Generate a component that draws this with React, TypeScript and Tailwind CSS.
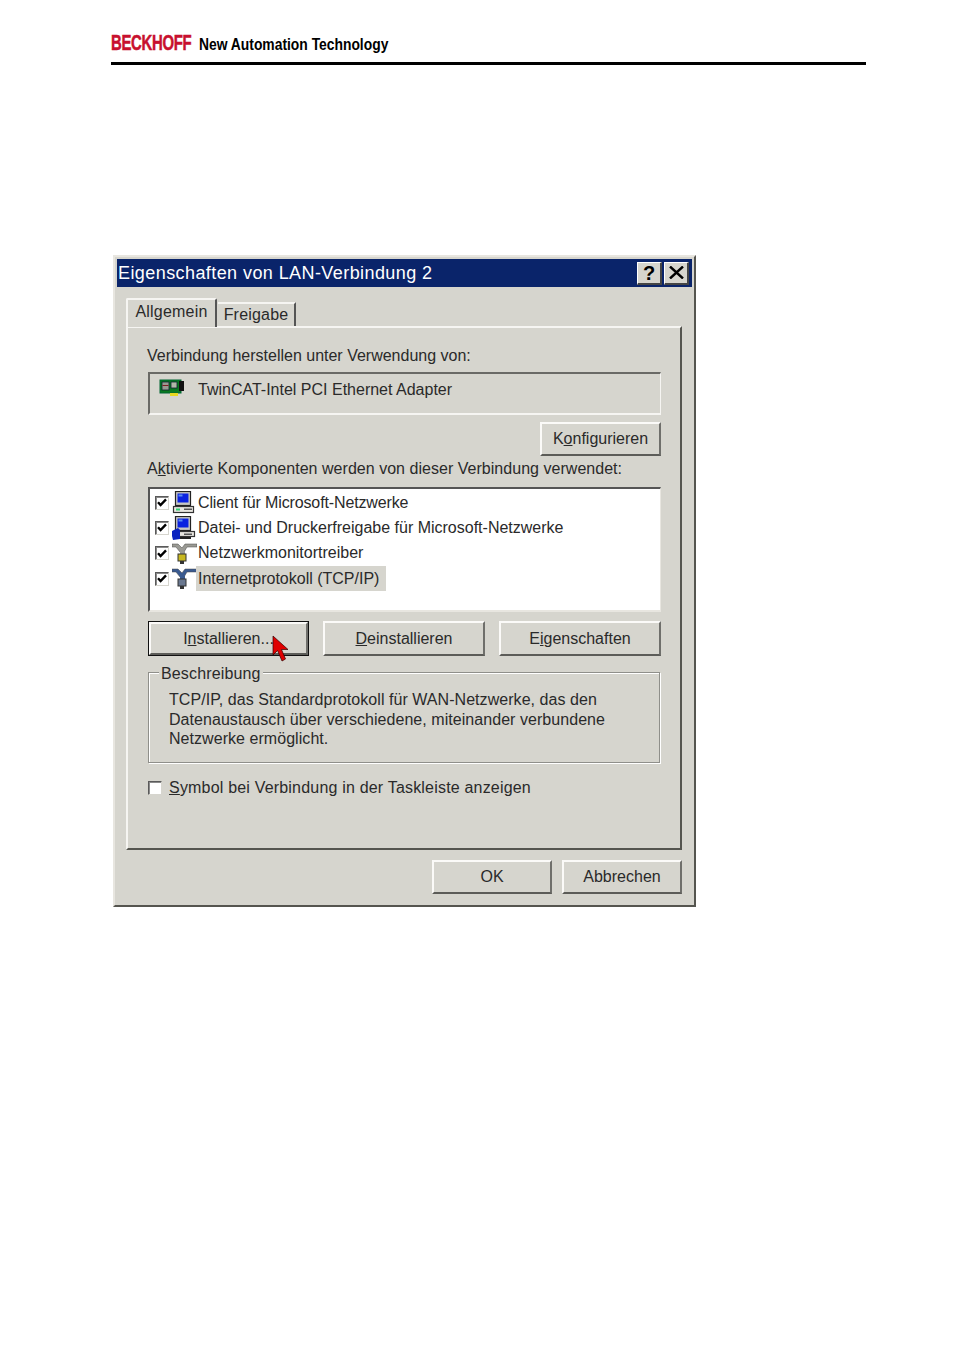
import React from "react";

const ff = { fontFamily: '"Liberation Sans", Arial, sans-serif' };

function Btn({ className, children, primary }: { className: string; children: React.ReactNode; primary?: boolean }) {
  return (
    <div className={`${className} ${primary ? "border border-[#111] " : ""}flex-none`}>
      <div className="h-full border-t-2 border-l-2 border-t-[#fbfaf8] border-l-[#fbfaf8] border-r-2 border-b-2 border-r-[#6f6f6b] border-b-[#5c5c58] flex items-center justify-center text-[16px] text-[#2a2a2a] bg-[#d6d5ce]">
        <span>{children}</span>
      </div>
    </div>
  );
}

function Check({ checked }: { checked?: boolean }) {
  return (
    <div className="w-[14px] h-[14px] flex-none bg-white border-t border-l border-t-[#5a5a5a] border-l-[#5a5a5a] border-r border-b border-r-[#d6d5ce] border-b-[#d6d5ce] shadow-[inset_1px_1px_0_#8a8a8a] flex items-center justify-center">
      {checked && (
        <svg width="10" height="9" viewBox="0 0 10 9">
          <path d="M1 4.2 L3.6 7 L9 1.4" fill="none" stroke="#000" strokeWidth="2.4" />
        </svg>
      )}
    </div>
  );
}

function Pc({ share }: { share?: boolean }) {
  return (
    <svg width="24" height="24" viewBox="0 0 24 24" className="flex-none">
      <rect x="3.5" y="0.5" width="15" height="14" fill="#c8c8c4" stroke="#222" strokeWidth="1.2" />
      <rect x="5.5" y="2.5" width="11" height="9" fill="#0a22e0" />
      <rect x="6.5" y="3.5" width="4" height="2" fill="#5a8cf0" />
      <rect x={share ? 6.5 : 1.5} y="15.5" width={share ? 16 : 20} height={share ? 5 : 6} fill="#e8e6e0" stroke="#333" strokeWidth="1.2" />
      <rect x="4" y="17.5" width="4" height="2" fill="#30d070" />
      <rect x="12" y="17.5" width="8" height="1.5" fill="#555" />
      {share && (
        <>
          <path d="M0 15 L6 12 L8 14 L8 23 L1 24 L0 20 Z" fill="#0a22c0" />
          <rect x="8" y="21" width="11" height="2" fill="#222" />
        </>
      )}
    </svg>
  );
}

function Net({ color, plug }: { color: string; plug: string }) {
  return (
    <svg width="25" height="21" viewBox="0 0 25 21" className="flex-none">
      <path d="M0 1 H6 L10 5 L13 1 H25 V4 H15 L12 9 H8 L4 4 H0 Z" fill={color} stroke="#444" strokeWidth="0.5" />
      <rect x="8" y="8" width="5" height="4" fill={color} />
      <rect x="6" y="11" width="8" height="7" fill={plug} stroke="#333" strokeWidth="1" />
      <rect x="8" y="18" width="4" height="3" fill="#333" />
    </svg>
  );
}

function Row({ icon, text, selected, tight }: { icon: React.ReactNode; text: string; selected?: boolean; tight?: boolean }) {
  return (
    <div className="h-[25.3px] flex items-center">
      <div className="w-[5px]" />
      <Check checked />
      <div className="w-[3px]" />
      <div className="w-[24px] flex justify-center">{icon}</div>
      <div className={`h-full flex items-center pl-[2px] pr-[7px] text-[16px] text-[#2a2a2a] ${selected ? "bg-[#d6d5ce]" : ""} ${tight ? "tracking-[-0.13px]" : ""}`}>{text}</div>
    </div>
  );
}

export default function App() {
  return (
    <div className="w-[954px] h-[1350px] bg-white pt-[30px] overflow-hidden" style={ff}>
      <div className="ml-[111px] w-[755px] h-[35px] border-b-[3px] border-black flex items-start">
        <span
          className="text-[#c8102e] font-bold text-[22px] leading-[26px] origin-left scale-x-[0.68] w-[88px] tracking-[-0.5px] whitespace-nowrap [-webkit-text-stroke:0.5px_#c8102e]"
          style={{ fontFamily: '"Liberation Sans Narrow", "Liberation Sans", sans-serif' }}
        >
          BECKHOFF
        </span>
        <span
          className="text-black text-[17px] leading-[30px] font-bold whitespace-nowrap origin-left scale-x-[0.815]"
          style={{ fontFamily: '"Liberation Sans Narrow", "Liberation Sans", sans-serif' }}
        >
          New Automation Technology
        </span>
      </div>

      {/* Dialog */}
      <div className="relative ml-[113px] mt-[190px] w-[583px] h-[652px] bg-[#d6d5ce] border-t-2 border-l-2 border-t-[#e8e6e0] border-l-[#e8e6e0] border-r-2 border-b-2 border-r-[#55554f] border-b-[#55554f] p-[2px]">
        <div className="h-[28px] bg-[#0a246a] flex items-center justify-between pl-[1px] pr-[3px]">
          <span className="text-white text-[18px] tracking-[0.42px]">Eigenschaften von LAN-Verbindung 2</span>
          <div className="flex gap-[2px]">
            <div className="w-[25px] h-[23px] bg-[#d6d5ce] border-t border-l border-white border-r-2 border-b-2 border-r-[#444] border-b-[#444] flex items-center justify-center text-[20px] font-bold text-black leading-none">?</div>
            <div className="w-[25px] h-[23px] bg-[#d6d5ce] border-t border-l border-white border-r-2 border-b-2 border-r-[#444] border-b-[#444] flex items-center justify-center">
              <svg width="15" height="13" viewBox="0 0 15 13"><path d="M1 0.5 L14 12.5 M14 0.5 L1 12.5" stroke="#000" strokeWidth="2.4" /></svg>
            </div>
          </div>
        </div>

        {/* Tabs */}
        <div className="ml-[9px] mt-[11px] h-[28px] flex items-end relative z-10">
          <div className="w-[91px] h-[29px] -mb-[1px] bg-[#d6d5ce] border-t-2 border-l-2 border-t-[#f6f5f2] border-l-[#f6f5f2] border-r-2 border-r-[#555] rounded-t-[2px] text-[16px] text-[#2a2a2a] text-center leading-[24px] tracking-[0.2px]">Allgemein</div>
          <div className="ml-[1px] w-[78px] h-[24px] bg-[#d6d5ce] border-t-2 border-t-[#f6f5f2] border-r-2 border-r-[#555] text-[16px] text-[#2a2a2a] text-center leading-[22px] tracking-[0.2px]">Freigabe</div>
        </div>

        {/* Panel */}
        <div className="ml-[9px] w-[556px] h-[524px] border-t-2 border-l-2 border-t-[#f6f5f2] border-l-[#f6f5f2] border-r-2 border-b-2 border-r-[#55554f] border-b-[#55554f] pl-[19px] pr-[19px] pt-[18px] text-[16px] text-[#2a2a2a]">
          <div className="h-[20px] leading-[20px]">Verbindung herstellen unter Verwendung von:</div>
          <div className="mt-[6px] ml-[1px] w-[513px] h-[43px] border-t-2 border-l-2 border-t-[#6a6a66] border-l-[#6a6a66] border-r border-b-2 border-r-[#f6f5f2] border-b-[#f6f5f2] flex items-start pt-[5px]">
            <svg width="26" height="18" viewBox="0 0 26 18" className="ml-[9px] flex-none">
              <rect x="1" y="1" width="21" height="13" fill="#0a7a20" stroke="#063" />
              <rect x="3" y="3" width="7" height="8" fill="#9a9a90" stroke="#123" strokeWidth="0.8" />
              <rect x="3.5" y="6" width="6" height="1" fill="#7a2020" />
              <rect x="12" y="3" width="6" height="6" fill="#b0b8a8" stroke="#123" strokeWidth="0.8" />
              <rect x="20" y="2" width="5" height="10" fill="#111" />
              <rect x="11" y="14" width="8" height="3" fill="#e8d820" />
            </svg>
            <span className="ml-[13px] leading-[22px]">TwinCAT-Intel PCI Ethernet Adapter</span>
          </div>
          <div className="mt-[7px] flex justify-end">
            <Btn className="w-[121px] h-[34px]">K<span className="underline">o</span>nfigurieren</Btn>
          </div>
          <div className="mt-[3px] h-[20px] leading-[20px] tracking-[0.03px]">A<span className="underline">k</span>tivierte Komponenten werden von dieser Verbindung verwendet:</div>
          <div className="mt-[8px] ml-[1px] w-[513px] h-[125px] pt-[1px] bg-white border-t-2 border-l-2 border-t-[#555] border-l-[#555] border-r border-b-2 border-r-[#e8e6e0] border-b-[#e8e6e0]">
            <Row icon={<Pc />} text="Client für Microsoft-Netzwerke" tight />
            <Row icon={<Pc share />} text="Datei- und Druckerfreigabe für Microsoft-Netzwerke" />
            <Row icon={<Net color="#9a9a94" plug="#c8b820" />} text="Netzwerkmonitortreiber" />
            <Row icon={<Net color="#3a5a90" plug="#6a7890" />} text="Internetprotokoll (TCP/IP)" selected />
          </div>
          <div className="mt-[9px] ml-[1px] w-[513px] flex justify-between relative">
            <Btn primary className="w-[161px] h-[35px]">I<span className="underline">n</span>stallieren...</Btn>
            <Btn className="w-[162px] h-[35px]"><span className="underline">D</span>einstallieren</Btn>
            <Btn className="w-[162px] h-[35px]">E<span className="underline">i</span>genschaften</Btn>
            <svg width="18" height="28" viewBox="0 0 18 28" className="absolute left-[124px] top-[14px]">
              <path d="M1 1 L1 20 L5.5 15.5 L10 26 L13.5 24 L9.5 14.5 L16 14.5 Z" fill="#e00000" stroke="#300" strokeWidth="0.7" />
            </svg>
          </div>
          {/* Beschreibung group */}
          <div className="relative mt-[16px] ml-[1px] w-[512px] h-[91px] border border-[#8f8f8a] shadow-[inset_1px_1px_0_#fff,1px_1px_0_#fff] pl-[20px] pt-[17px] leading-[19.5px] tracking-[0.05px]">
            <span className="absolute left-[10px] -top-[8px] bg-[#d6d5ce] px-[2px] leading-[18px] tracking-[0.15px]">Beschreibung</span>
            <div>TCP/IP, das Standardprotokoll für WAN-Netzwerke, das den</div>
            <div>Datenaustausch über verschiedene, miteinander verbundene</div>
            <div>Netzwerke ermöglicht.</div>
          </div>
          <div className="mt-[15px] ml-[1px] flex items-center h-[20px]">
            <Check />
            <span className="ml-[7px] tracking-[0.19px]"><span className="underline">S</span>ymbol bei Verbindung in der Taskleiste anzeigen</span>
          </div>
        </div>

        {/* Footer */}
        <div className="mt-[10px] w-[565px] flex justify-end gap-[10px]">
          <Btn className="w-[120px] h-[34px]">OK</Btn>
          <Btn className="w-[120px] h-[34px]">Abbrechen</Btn>
        </div>
      </div>
    </div>
  );
}
